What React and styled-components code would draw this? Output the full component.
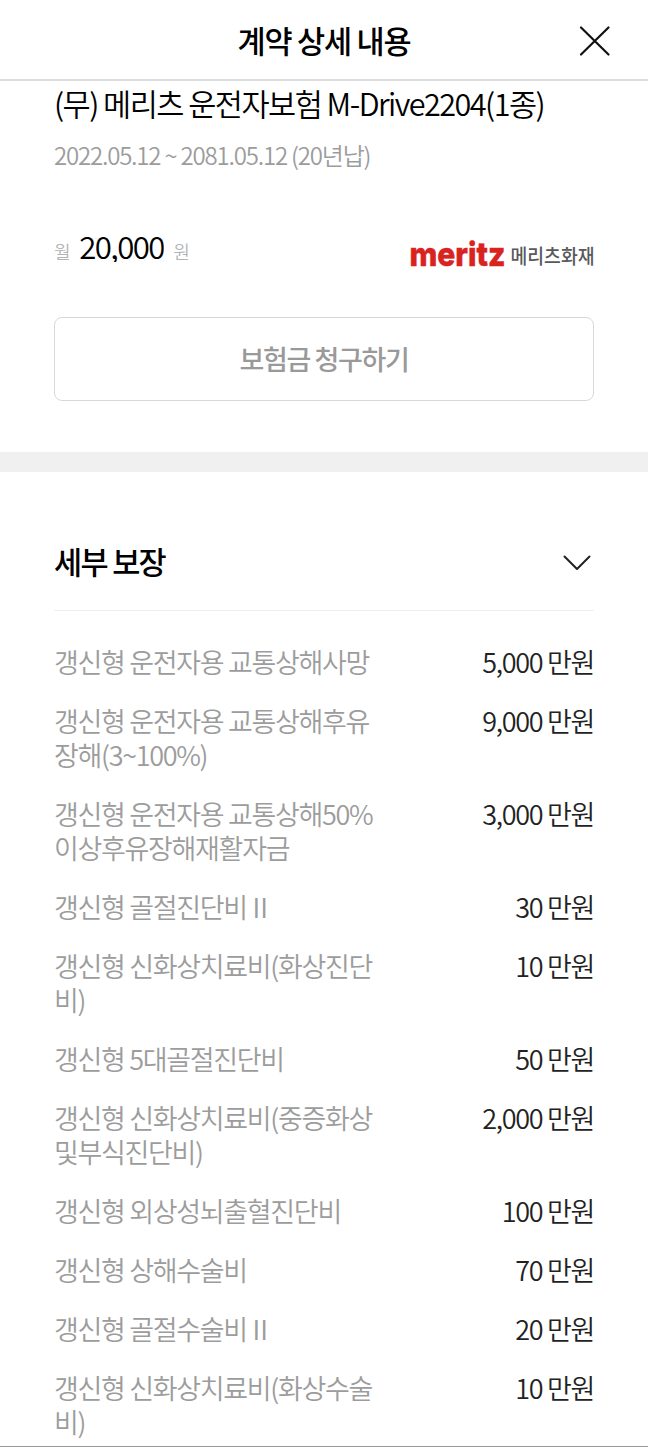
import React from 'react';
import styled, { createGlobalStyle } from 'styled-components';

const coverages = [
	{ lines: ['갱신형 운전자용 교통상해사망'], amount: '5,000' },
	{ lines: ['갱신형 운전자용 교통상해후유', '장해(3~100%)'], amount: '9,000' },
	{ lines: ['갱신형 운전자용 교통상해50%', '이상후유장해재활자금'], amount: '3,000' },
	{ lines: ['갱신형 골절진단비Ⅱ'], amount: '30' },
	{ lines: ['갱신형 신화상치료비(화상진단', '비)'], amount: '10' },
	{ lines: ['갱신형 5대골절진단비'], amount: '50' },
	{ lines: ['갱신형 신화상치료비(중증화상', '및부식진단비)'], amount: '2,000' },
	{ lines: ['갱신형 외상성뇌출혈진단비'], amount: '100' },
	{ lines: ['갱신형 상해수술비'], amount: '70' },
	{ lines: ['갱신형 골절수술비Ⅱ'], amount: '20' },
	{ lines: ['갱신형 신화상치료비(화상수술', '비)'], amount: '10' },
];

const MeritzLogo = () => (
	<Logo viewBox="0 0 190 44" role="img" aria-label="meritz 메리츠화재">
		<Wordmark x="0.5" y="33.5" textLength="96" lengthAdjust="spacingAndGlyphs">
			meritz
		</Wordmark>
		<LogoName x="101.5" y="32" textLength="84" lengthAdjust="spacingAndGlyphs">
			메리츠화재
		</LogoName>
	</Logo>
);

const App = () => (
	<Page>
		<GlobalStyle />
		<Header>
			<HeaderTitle>계약 상세 내용</HeaderTitle>
			<CloseButton aria-label="닫기">
				<svg width="32" height="32" viewBox="0 0 32 32">
					<path d="M2 2.5L29.5 29.5M29.5 2.5L2 29.5" />
				</svg>
			</CloseButton>
		</Header>

		<Summary>
			<ProductName>(무) 메리츠 운전자보험 M-Drive2204(1종)</ProductName>
			<Period>2022.05.12 ~ 2081.05.12 (20년납)</Period>
			<PremiumRow>
				<Premium>
					<Unit>월</Unit>
					<Price>20,000</Price>
					<Unit>원</Unit>
				</Premium>
				<MeritzLogo />
			</PremiumRow>
			<ClaimButton>보험금 청구하기</ClaimButton>
		</Summary>

		<Details>
			<SectionHeader>
				<SectionTitle>세부 보장</SectionTitle>
				<Chevron width="28" height="16" viewBox="0 0 28 16">
					<path d="M1.5 1.5L14 14L26.5 1.5" />
				</Chevron>
			</SectionHeader>
			<List>
				{coverages.map(({ lines, amount }, i) => (
					<Item key={i}>
						<Label>
							{lines.map(line => (
								<span key={line}>{line}</span>
							))}
						</Label>
						<Amount>{amount} 만원</Amount>
					</Item>
				))}
			</List>
		</Details>
	</Page>
);

export default App;

const GlobalStyle = createGlobalStyle`
	* {
		box-sizing: border-box;
	}

	body {
		margin: 0;
		background: #fff;
		overflow: hidden;
	}
`;

const Page = styled.div`
	display: flex;
	flex-direction: column;
	width: 648px;
	height: 1447px;
	overflow: hidden;
	border-bottom: 1px solid #999;
	background: #fff;
	color: #000;
	font-family: 'Noto Sans CJK KR', sans-serif;
`;

const Header = styled.header`
	display: grid;
	grid-template-columns: 1fr auto 1fr;
	align-items: center;
	flex: none;
	height: 81px;
	padding: 2px 37px 0;
	border-bottom: 2px solid #ddd;
`;

const HeaderTitle = styled.h1`
	grid-column: 2;
	margin: -2px 0 0;
	font-size: 30.6px;
	line-height: 44px;
	font-weight: 500;
	letter-spacing: -0.04em;
`;

const CloseButton = styled.button`
	justify-self: end;
	display: flex;
	padding: 0;
	border: 0;
	background: none;

	path {
		fill: none;
		stroke: #111;
		stroke-width: 2.2;
		stroke-linecap: round;
	}
`;

const Summary = styled.section`
	flex: none;
	height: 391px;
	padding: 0 54px;
	border-bottom: 20px solid #f0f0f0;
`;

const ProductName = styled.h2`
	margin: 0;
	font-size: 30.6px;
	line-height: 44px;
	font-weight: 350;
	letter-spacing: -0.05em;
	white-space: nowrap;
`;

const Period = styled.p`
	margin: 12px 0 0;
	color: #9c9c9c;
	font-size: 24px;
	line-height: 36px;
	font-weight: 350;
	letter-spacing: -0.05em;
`;

const PremiumRow = styled.div`
	display: flex;
	justify-content: space-between;
	align-items: flex-start;
	height: 44px;
	margin-top: 51px;
`;

const Premium = styled.div`
	display: flex;
	align-items: baseline;
	gap: 9.5px;
	line-height: 44px;
`;

const Unit = styled.span`
	color: #b4b4b4;
	font-size: 18px;
	font-weight: 350;
	letter-spacing: -0.05em;
`;

const Price = styled.strong`
	font-size: 31.2px;
	font-weight: 350;
	letter-spacing: -0.05em;
	clip-path: inset(0 0 6px 0);
`;

const Logo = styled.svg`
	width: 190px;
	height: 44px;
	margin: 8px -5px 0 0;
`;

const Wordmark = styled.text`
	fill: #d9231f;
	stroke: #d9231f;
	stroke-width: 0.5px;
	font-family: Inter, sans-serif;
	font-size: 33.5px;
	font-weight: 800;
`;

const LogoName = styled.text`
	fill: #58595b;
	font-size: 20px;
	font-weight: 500;
`;

const ClaimButton = styled.button`
	display: block;
	width: 100%;
	height: 84px;
	margin-top: 49px;
	padding: 0 0 1px;
	border: 1px solid #d8d8d8;
	border-radius: 8px;
	background: #fff;
	color: #999;
	font: 500 27px 'Noto Sans CJK KR', sans-serif;
	letter-spacing: -0.05em;
`;

const Details = styled.section`
	padding: 0 54px;
`;

const SectionHeader = styled.div`
	display: flex;
	justify-content: space-between;
	align-items: center;
	height: 139px;
	padding: 43px 3px 0 0;
	border-bottom: 1px solid #eee;
`;

const SectionTitle = styled.h3`
	margin: -4px 0 0;
	font-size: 30.6px;
	line-height: 44px;
	font-weight: 500;
	letter-spacing: -0.055em;
`;

const Chevron = styled.svg`
	fill: none;
	stroke: #222;
	stroke-width: 2;
	stroke-linecap: round;
	stroke-linejoin: round;
`;

const List = styled.ul`
	display: flex;
	flex-direction: column;
	gap: 25px;
	margin: 0;
	padding: 34px 0 0;
	list-style: none;
	font-size: 27px;
	line-height: 34px;
	letter-spacing: -0.049em;
`;

const Item = styled.li`
	display: flex;
	justify-content: space-between;
	align-items: flex-start;
`;

const Label = styled.div`
	display: flex;
	flex-direction: column;
	color: #9c9c9c;
	font-weight: 350;
	white-space: nowrap;
`;

const Amount = styled.div`
	color: #222;
	font-weight: 350;
	white-space: nowrap;
`;
